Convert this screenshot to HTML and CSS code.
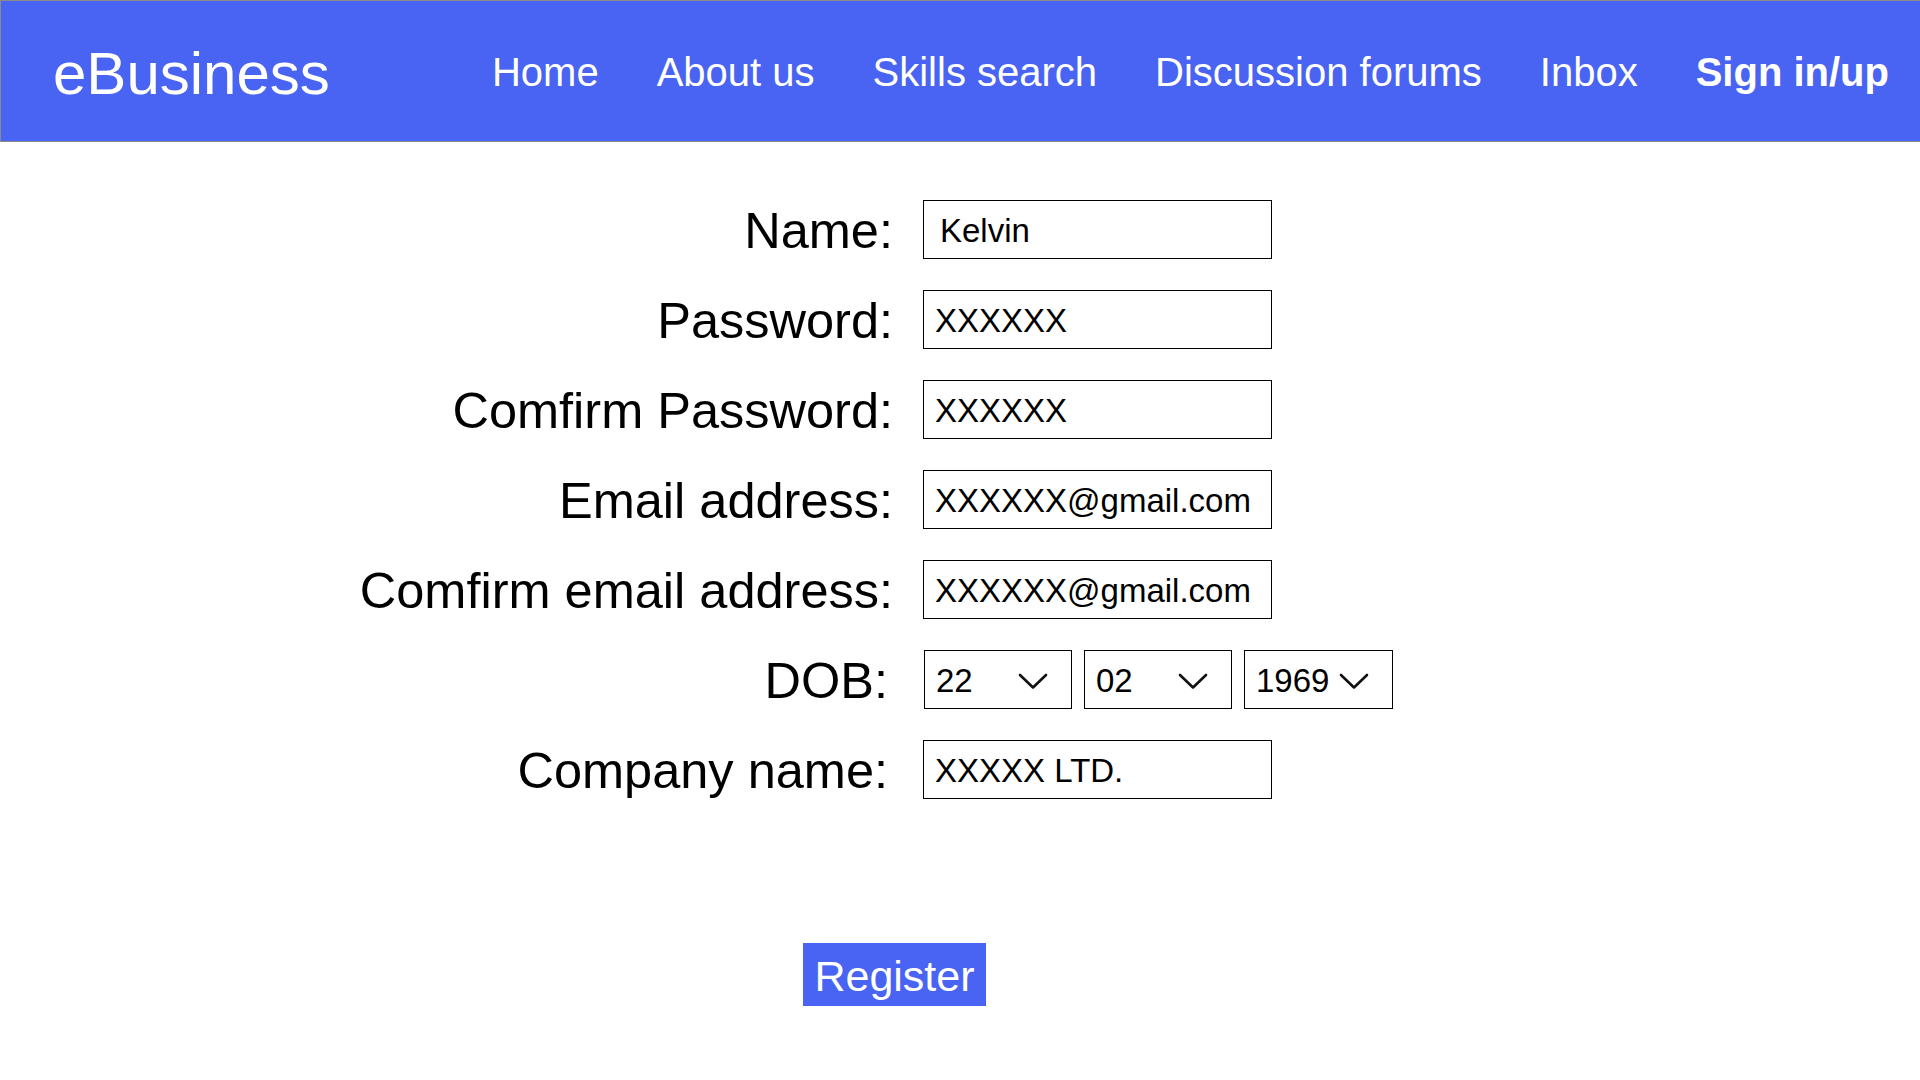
FILE: index.html
```html
<!DOCTYPE html>
<html lang="en">
<head>
<meta charset="utf-8">
<title>eBusiness - Register</title>
<link rel="stylesheet" href="styles.css">
</head>
<body>
<header class="topbar">
  <div class="logo">eBusiness</div>
  <nav class="nav">
    <a class="nav-link" href="#">Home</a>
    <a class="nav-link" href="#">About us</a>
    <a class="nav-link" href="#">Skills search</a>
    <a class="nav-link" href="#">Discussion forums</a>
    <a class="nav-link" href="#">Inbox</a>
    <a class="nav-link nav-link-active" href="#">Sign in/up</a>
  </nav>
</header>
<main class="main">
  <form class="form">
    <label class="label">Name:</label>
    <input class="field field-name" type="text" value="Kelvin">
    <label class="label">Password:</label>
    <input class="field" type="text" value="XXXXXX">
    <label class="label">Comfirm Password:</label>
    <input class="field" type="text" value="XXXXXX">
    <label class="label">Email address:</label>
    <input class="field" type="text" value="XXXXXX@gmail.com">
    <label class="label">Comfirm email address:</label>
    <input class="field" type="text" value="XXXXXX@gmail.com">
    <label class="label label-tight">DOB:</label>
    <div class="dob">
      <div class="select"><span>22</span><svg class="chev" width="30" height="17" viewBox="0 0 30 17"><polyline points="2,2 15,14.5 28,2" fill="none" stroke="#111" stroke-width="2.6" stroke-linecap="round" stroke-linejoin="round"/></svg></div>
      <div class="select"><span>02</span><svg class="chev" width="30" height="17" viewBox="0 0 30 17"><polyline points="2,2 15,14.5 28,2" fill="none" stroke="#111" stroke-width="2.6" stroke-linecap="round" stroke-linejoin="round"/></svg></div>
      <div class="select select-year"><span>1969</span><svg class="chev" width="30" height="17" viewBox="0 0 30 17"><polyline points="2,2 15,14.5 28,2" fill="none" stroke="#111" stroke-width="2.6" stroke-linecap="round" stroke-linejoin="round"/></svg></div>
    </div>
    <label class="label label-tight">Company name:</label>
    <input class="field" type="text" value="XXXXX LTD.">
  </form>
  <div class="actions">
    <button class="btn" type="button">Register</button>
  </div>
</main>
</body>
</html>
```
FILE: styles.css
```css
html, body {
  margin: 0;
  padding: 0;
  background: #ffffff;
}
body {
  font-family: "Liberation Sans", Arial, Helvetica, sans-serif;
  color: #000;
  width: 1920px;
  overflow: hidden;
}
.topbar {
  box-sizing: border-box;
  height: 142px;
  background: #4964f2;
  border: 1px solid #8a8a8a;
  border-right: none;
  display: flex;
  align-items: center;
  padding: 0 31px 0 52px;
}
.logo {
  color: #fff;
  font-size: 60px;
  margin-top: 5px;
}
.nav {
  margin-left: auto;
  display: flex;
  gap: 58px;
  margin-top: 2px;
}
.nav-link {
  color: #fff;
  text-decoration: none;
  font-size: 40px;
}
.nav-link-active {
  font-weight: bold;
}
.main {
  padding-top: 58px;
}
.form {
  display: grid;
  grid-template-columns: 893px 349px;
  grid-auto-rows: 59px;
  column-gap: 30px;
  row-gap: 31px;
  align-items: center;
}
.label {
  text-align: right;
  font-size: 50.5px;
  line-height: 57px;
  padding-top: 2px;
}
.label-tight {
  padding-right: 5px;
}
.field {
  box-sizing: border-box;
  width: 349px;
  height: 59px;
  margin: 0;
  border: 1px solid #000;
  border-radius: 0;
  padding: 2px 0 0 11px;
  font-family: "Liberation Sans", Arial, Helvetica, sans-serif;
  font-size: 33px;
  color: #000;
  background: #fff;
  outline: none;
}
.field-name {
  padding-left: 16px;
}
.dob {
  display: flex;
  gap: 12px;
  margin-left: 1px;
}
.select {
  box-sizing: border-box;
  width: 148px;
  height: 59px;
  border: 1px solid #000;
  display: flex;
  align-items: center;
  justify-content: space-between;
  padding: 2px 23px 0 11px;
  font-size: 33px;
  flex: none;
}
.select-year {
  width: 149px;
}
.chev {
  display: block;
  margin-top: 1px;
}
.actions {
  display: flex;
  padding-left: 803px;
  margin-top: 144px;
}
.btn {
  width: 183px;
  height: 63px;
  border: none;
  padding: 3px 0 0;
  background: #4964f2;
  color: #fff;
  font-family: "Liberation Sans", Arial, Helvetica, sans-serif;
  font-size: 43px;
  cursor: pointer;
}
```
